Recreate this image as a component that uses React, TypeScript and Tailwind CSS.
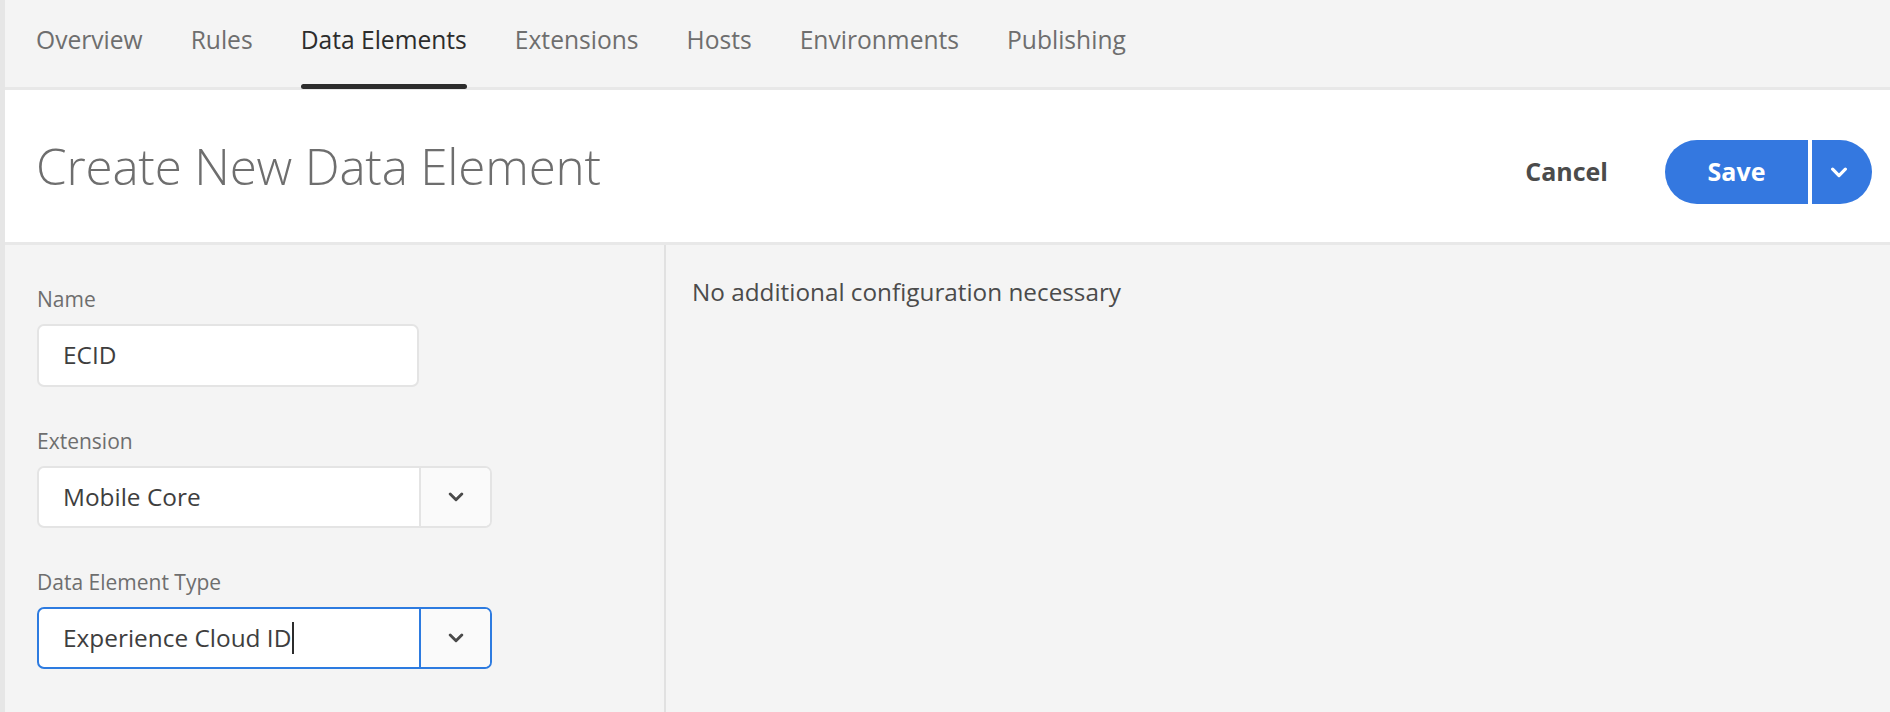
import React from "react"

const tabs = ["Overview", "Rules", "Data Elements", "Extensions", "Hosts", "Environments", "Publishing"]

function Chevron({ className }: { className?: string }) {
  return (
    <svg className={className} viewBox="0 0 14 9" fill="none" stroke="currentColor">
      <path d="M1.8 1.8 7 7 12.2 1.8" strokeWidth={2.6} strokeLinecap="round" strokeLinejoin="round" />
    </svg>
  )
}

function Field({ label, children }: { label: string; children: React.ReactNode }) {
  return (
    <div className="flex flex-col">
      <label className="text-[21px] leading-[24px] text-[#6e6e6e]">{label}</label>
      <div className="mt-[13px]">{children}</div>
    </div>
  )
}

function Picker({ value, focused }: { value: string; focused?: boolean }) {
  return (
    <div
      className={`flex h-[62px] w-[455px] rounded-[7px] border-2 bg-white overflow-hidden ${
        focused ? "border-[#2d7be0]" : "border-[#e4e4e4]"
      }`}
    >
      <div className="flex flex-1 items-center pl-[24px] text-[24.4px] text-[#3e3e3e]">
        {value}
        {focused && <span className="ml-[1px] h-[32px] w-[2px] bg-[#2c2c2c]" />}
      </div>
      <div
        className={`flex w-[71px] items-center justify-center border-l-2 bg-[#fafafa] text-[#4b4b4b] ${
          focused ? "border-[#2d7be0]" : "border-[#e4e4e4]"
        }`}
      >
        <Chevron className="h-[10px] w-[16px]" />
      </div>
    </div>
  )
}

export default function App() {
  return (
    <div
      className="flex h-[712px] w-[1890px] flex-col overflow-hidden border-l-[5px] border-[#e6e6e6] bg-[#f4f4f4]"
      style={{ fontFamily: '"Open Sans", "Noto Sans", sans-serif' }}
    >
      {/* Tabs */}
      <nav className="flex h-[90px] shrink-0 items-center gap-[48px] border-b-[3px] border-[#e8e8e8] pl-[31px] pb-[6px]">
        {tabs.map((t) => {
          const active = t === "Data Elements"
          return (
            <div key={t} className="relative flex h-full items-center">
              <span className={`text-[24.6px] ${active ? "text-[#2c2c2c]" : "text-[#6e6e6e]"}`}>{t}</span>
              {active && <span className="absolute left-0 right-0 bottom-[-8px] h-[5px] rounded-full bg-[#2c2c2c]" />}
            </div>
          )
        })}
      </nav>

      {/* Header */}
      <header className="flex h-[155px] shrink-0 items-center justify-between border-b-[3px] border-[#e8e8e8] bg-white pl-[31px] pr-[18px]">
        <h1 className="text-[49.4px] font-light tracking-[-0.2px] text-[#6e6e6e]">Create New Data Element</h1>
        <div className="mt-[12px] flex items-center">
          <button className="text-[25px] font-bold text-[#4b4b4b]">Cancel</button>
          <div className="ml-[57px] flex h-[64px]">
            <button className="w-[143px] rounded-l-full bg-[#3478e0] text-[25px] font-bold text-white">Save</button>
            <button className="ml-[4px] flex w-[60px] items-center justify-center rounded-r-full bg-[#3478e0] pr-[6px] text-white">
              <Chevron className="h-[11px] w-[18px]" />
            </button>
          </div>
        </div>
      </header>

      {/* Body */}
      <div className="flex flex-1">
        <aside className="flex w-[661px] shrink-0 flex-col gap-[42px] border-r-2 border-[#e1e1e1] pl-[32px] pt-[42px]">
          <Field label="Name">
            <div className="flex h-[63px] w-[382px] items-center rounded-[7px] border-2 border-[#e4e4e4] bg-white pl-[24px] text-[24.4px] text-[#3e3e3e]">
              ECID
            </div>
          </Field>
          <Field label="Extension">
            <Picker value="Mobile Core" />
          </Field>
          <Field label="Data Element Type">
            <Picker value="Experience Cloud ID" focused />
          </Field>
        </aside>
        <main className="flex-1 pl-[26px] pt-[29px]">
          <p className="text-[24.3px] text-[#4b4b4b]">No additional configuration necessary</p>
        </main>
      </div>
    </div>
  )
}
